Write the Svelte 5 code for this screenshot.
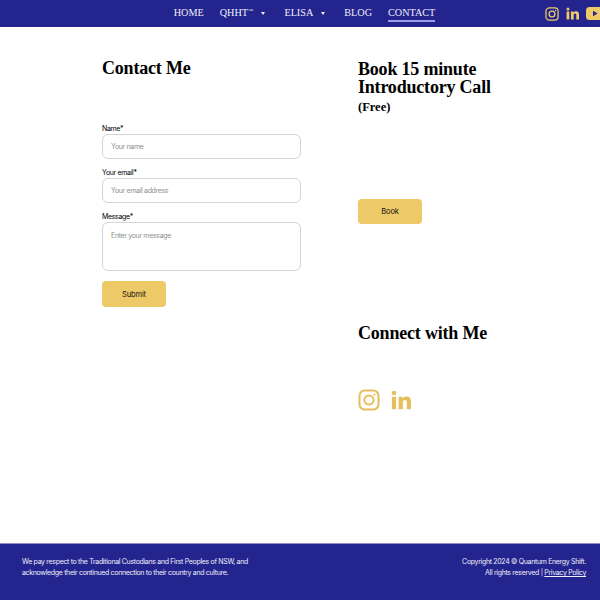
<script>
    const links = [
        { label: "HOME" },
        { label: "QHHT", sup: "™", caret: true },
        { label: "ELISA", caret: true },
        { label: "BLOG" },
        { label: "CONTACT", active: true }
    ];
</script>

{#snippet instagram(size)}
    <svg width={size} height={size} viewBox="0 0 24 24" fill="none" stroke="currentColor" stroke-width="2.2">
        <rect x="1.6" y="1.6" width="20.8" height="20.8" rx="5.8" />
        <circle cx="12" cy="12" r="5" />
        <circle cx="18" cy="6" r="1.2" fill="currentColor" stroke="none" />
    </svg>
{/snippet}

{#snippet linkedin(size)}
    <svg width={size} height={size} viewBox="0 0 24 24" fill="currentColor">
        <circle cx="3.6" cy="3.6" r="2.8" />
        <rect x="1.1" y="8.2" width="5" height="14.8" />
        <path d="M9.2 8.2h4.7v2.1c.8-1.4 2.5-2.5 4.8-2.5 4.2 0 5.3 2.8 5.3 6.7V23h-5v-7.5c0-1.9-.3-3.400-2.200-3.400-2 0-2.600 1.500-2.600 3.400V23h-5z" />
    </svg>
{/snippet}

<div class="page">
    <header class="topbar">
        <div></div>
        <nav class="menu">
            {#each links as link}
                <a href="#top" class="menu-link" class:active={link.active}>
                    {link.label}{#if link.sup}<sup>{link.sup}</sup>{/if}
                    {#if link.caret}<span class="caret"></span>{/if}
                </a>
            {/each}
        </nav>
        <div class="top-social">
            {@render instagram(14)}
            {@render linkedin(13)}
            <svg class="yt" width="18" height="13" viewBox="0 0 18 13">
                <rect width="18" height="13" rx="3.500" fill="currentColor" />
                <path d="M7 3.800v5.400l4.600-2.700z" fill="#24248f" />
            </svg>
        </div>
    </header>

    <main class="content">
        <section class="form-col">
            <h1 class="contact-title">Contact Me</h1>
            <form class="form">
                <label for="name">Name*</label>
                <input id="name" type="text" placeholder="Your name" />
                <label for="email">Your email*</label>
                <input id="email" type="text" placeholder="Your email address" />
                <label for="message">Message*</label>
                <textarea id="message" placeholder="Enter your message"></textarea>
                <button type="button" class="btn submit">Submit</button>
            </form>
        </section>

        <section class="side-col">
            <h2 class="book-title">Book 15 minute Introductory Call</h2>
            <div class="free">(Free)</div>
            <button type="button" class="btn book">Book</button>
            <h2 class="connect-title">Connect with Me</h2>
            <div class="connect-social">
                {@render instagram(22)}
                {@render linkedin(20)}
            </div>
        </section>
    </main>

    <footer class="footer">
        <p>We pay respect to the Traditional Custodians and First Peoples of NSW, and<br />acknowledge their continued connection to their country and culture.</p>
        <p class="legal">Copyright 2024 © Quantum Energy Shift.<br />All rights reserved | <a href="#top">Privacy Policy</a></p>
    </footer>
</div>

<style>
    :global(body) {
        margin: 0;
        background: #fff;
        overflow: hidden;
    }

    .page {
        display: flex;
        flex-direction: column;
        height: 600px;
        font-family: Inter, "Liberation Sans", sans-serif;
        color: #000;
    }

    .topbar {
        display: grid;
        grid-template-columns: 1fr auto 1fr;
        align-items: center;
        height: 27px;
        flex: none;
        background: #24248f;
        overflow: hidden;
    }

    .menu {
        display: flex;
        gap: 16px;
        padding-left: 9px;
    }

    .menu-link {
        color: #f0f0fa;
        font-family: "Liberation Serif", serif;
        font-size: 10.2px;
        line-height: 13px;
        text-decoration: none;
        padding-bottom: 1px;
        border-bottom: 2px solid transparent;
        white-space: nowrap;
    }

    .menu-link.active {
        border-bottom-color: #9c9ce8;
    }

    sup {
        font-size: 5px;
        line-height: 0;
    }

    .caret {
        display: inline-block;
        width: 0;
        height: 0;
        margin: 0 3px 1px 6px;
        border-left: 2.500px solid transparent;
        border-right: 2.500px solid transparent;
        border-top: 3px solid #f0f0fa;
    }

    .top-social {
        display: flex;
        align-items: center;
        justify-content: flex-end;
        gap: 7px;
        margin-right: -4px;
        color: #edc967;
    }

    .content {
        flex: 1;
        display: flex;
        padding-left: 102px;
    }

    .form-col {
        width: 199px;
        margin-right: 57px;
    }

    h1, h2 {
        margin: 0;
        font-family: "Liberation Serif", serif;
        font-weight: 700;
        letter-spacing: -0.2px;
    }

    .contact-title {
        margin-top: 30px;
        font-size: 18px;
        line-height: 22px;
    }

    .form {
        display: flex;
        flex-direction: column;
        margin-top: 44px;
    }

    label {
        font-size: 7px;
        line-height: 11px;
        letter-spacing: -0.33px;
    }

    input, textarea {
        box-sizing: border-box;
        width: 199px;
        height: 24.500px;
        padding: 0 8px;
        margin-bottom: 8.500px;
        border: 1px solid #d4d4d8;
        border-radius: 6px;
        font-family: inherit;
        font-size: 7px;
        letter-spacing: -0.33px;
        outline: none;
        resize: none;
    }

    textarea {
        height: 49px;
        padding-top: 8px;
        margin-bottom: 10px;
    }

    input::placeholder, textarea::placeholder {
        color: #8f8f8f;
        opacity: 1;
    }

    .btn {
        display: block;
        width: 64px;
        height: 26px;
        padding: 0;
        border: none;
        border-radius: 4px;
        background: #edc967;
        color: #111;
        font-family: inherit;
        font-size: 7.500px;
        letter-spacing: -0.15px;
    }

    .side-col {
        width: 150px;
    }

    .book-title {
        margin-top: 33px;
        font-size: 18px;
        line-height: 18px;
    }

    .free {
        margin-top: 3px;
        font-family: "Liberation Serif", serif;
        font-weight: 700;
        font-size: 12.500px;
        line-height: 16px;
    }

    .book {
        margin-top: 83.500px;
        height: 25px;
    }

    .connect-title {
        margin-top: 98.500px;
        font-size: 18px;
        line-height: 22px;
    }

    .connect-social {
        display: flex;
        align-items: center;
        gap: 11px;
        margin-top: 45px;
        color: #e6bf5c;
    }

    .footer {
        flex: none;
        box-sizing: border-box;
        height: 57px;
        display: flex;
        justify-content: space-between;
        padding: 12px 14px 0 22px;
        background: #24248f;
        border-top: 1px solid #8f8fc8;
        color: #eeeef8;
        font-size: 7px;
        letter-spacing: -0.33px;
        line-height: 11px;
    }

    .footer p {
        margin: 0;
    }

    .legal {
        text-align: right;
    }

    .legal a {
        color: inherit;
    }
</style>
